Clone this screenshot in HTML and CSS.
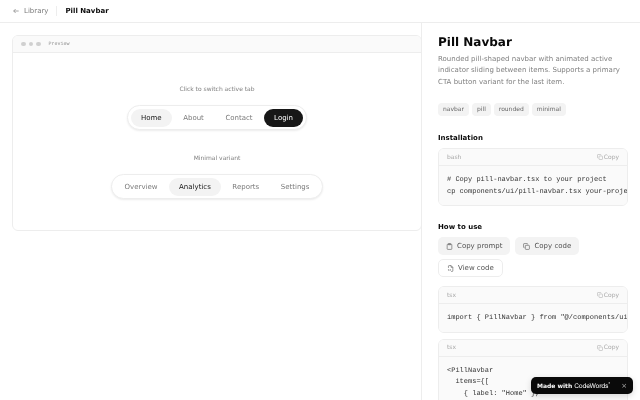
FILE: index.html
```html
<!DOCTYPE html>
<html lang="en">
<head>
<meta charset="utf-8">
<title>Pill Navbar</title>
<link rel="stylesheet" href="styles.css">
</head>
<body>
<header class="top">
  <a class="back"><svg class="ic-back" viewBox="0 0 12 12"><path d="M10 6H2.500M5.500 3 2.500 6l3 3"/></svg>Library</a>
  <span class="sep"></span>
  <b class="crumb">Pill Navbar</b>
</header>
<div class="main">
  <section class="left">
    <div class="card">
      <div class="bar">
        <i class="dot"></i><i class="dot"></i><i class="dot"></i>
        <span class="bar-label">Preview</span>
      </div>
      <div class="stage">
        <p class="cap">Click to switch active tab</p>
        <nav class="pill">
          <a class="item active">Home</a><a class="item">About</a><a class="item">Contact</a><a class="item cta">Login</a>
        </nav>
        <p class="cap cap2">Minimal variant</p>
        <nav class="pill">
          <a class="item">Overview</a><a class="item active">Analytics</a><a class="item">Reports</a><a class="item">Settings</a>
        </nav>
      </div>
    </div>
  </section>
  <aside class="side">
    <h1>Pill Navbar</h1>
    <p class="desc">Rounded pill-shaped navbar with animated active indicator sliding between items. Supports a primary CTA button variant for the last item.</p>
    <div class="tags"><span>navbar</span><span>pill</span><span>rounded</span><span>minimal</span></div>
    <h2>Installation</h2>
    <div class="code">
      <div class="code-h"><span>bash</span><span class="copy"><svg class="ic-s" viewBox="0 0 12 12"><rect x="4" y="4" width="7" height="7" rx="1.200"/><path d="M2.500 8H2a1 1 0 0 1-1-1V2a1 1 0 0 1 1-1h5a1 1 0 0 1 1 1v.5"/></svg>Copy</span></div>
      <pre># Copy pill-navbar.tsx to your project
cp components/ui/pill-navbar.tsx your-project/components/</pre>
    </div>
    <h2 class="how">How to use</h2>
    <div class="btns">
      <a class="btn"><svg class="ic" viewBox="0 0 12 12"><rect x="2" y="2" width="8" height="9" rx="1.200"/><rect x="4" y="1" width="4" height="2" rx=".5"/></svg>Copy prompt</a>
      <a class="btn"><svg class="ic" viewBox="0 0 12 12"><rect x="4" y="4" width="7" height="7" rx="1.200"/><path d="M2.500 8H2a1 1 0 0 1-1-1V2a1 1 0 0 1 1-1h5a1 1 0 0 1 1 1v.5"/></svg>Copy code</a>
      <a class="btn ghost"><svg class="ic" viewBox="0 0 12 12"><path d="M2.500 5V2a1 1 0 0 1 1-1H7l3 3v6a1 1 0 0 1-1 1H7M7 1v3h3M3.500 7 2 8.500 3.500 10M5 7l1.500 1.500L5 10"/></svg>View code</a>
    </div>
    <div class="code">
      <div class="code-h"><span>tsx</span><span class="copy"><svg class="ic-s" viewBox="0 0 12 12"><rect x="4" y="4" width="7" height="7" rx="1.200"/><path d="M2.500 8H2a1 1 0 0 1-1-1V2a1 1 0 0 1 1-1h5a1 1 0 0 1 1 1v.5"/></svg>Copy</span></div>
      <pre>import { PillNavbar } from "@/components/ui/pill-navbar"</pre>
    </div>
    <div class="code">
      <div class="code-h"><span>tsx</span><span class="copy"><svg class="ic-s" viewBox="0 0 12 12"><rect x="4" y="4" width="7" height="7" rx="1.200"/><path d="M2.500 8H2a1 1 0 0 1-1-1V2a1 1 0 0 1 1-1h5a1 1 0 0 1 1 1v.5"/></svg>Copy</span></div>
      <pre>&lt;PillNavbar
  items={[
    { label: "Home" },
    { label: "About" },
  ]}
/&gt;</pre>
    </div>
  </aside>
</div>
<div class="toast"><span class="made">Made with <span class="brand">CodeWords<sup>*</sup></span></span><span class="x">×</span></div>
</body>
</html>
```
FILE: styles.css
```css
* { box-sizing: border-box; }
html { background: #fff; }
html, body { margin: 0; height: 100%; overflow: hidden; }
body { color: #171717; font-family: "DejaVu Sans", sans-serif; text-rendering: geometricPrecision; display: flex; flex-direction: column; will-change: transform; }
.top { height: 23px; flex: none; border-bottom: 1px solid #ededed; display: flex; align-items: center; padding: 0 12px; font-size: 7px; }
.back { display: flex; align-items: center; gap: 4px; color: #7a7a7a; }
.ic-back { width: 8px; height: 8px; fill: none; stroke: #7a7a7a; stroke-width: 1; }
.sep { width: 1px; height: 10px; background: #ededed; margin: 0 8px; }
.crumb { font-weight: 700; color: #0a0a0a; }
.main { flex: 1; display: flex; min-height: 0; }
.left { width: 422px; flex: none; padding: 12px 0 0 12px; border-right: 1px solid #ededed; }
.card { height: 196px; margin-right: -1px; border: 1px solid #ededed; border-radius: 6px; overflow: hidden; }
.bar { height: 17px; border-bottom: 1px solid #ededed; background: #fafafa; display: flex; align-items: center; padding: 0 8px; gap: 3px; }
.dot { width: 4.500px; height: 4.500px; border-radius: 50%; background: #d0d0d0; }
.bar-label { font: 5px "Liberation Mono", monospace; color: #8f8f8f; margin-left: 5px; }
.stage { display: flex; flex-direction: column; align-items: center; padding-top: 33px; }
.cap { margin: 0; font-size: 6px; line-height: 8px; color: #7f7f7f; }
.cap2 { margin-top: 25px; }
.pill { display: flex; gap: 1.500px; margin-top: 11px; height: 25px; padding: 3px; border: 1px solid #ededed; border-radius: 13px; background: #fff; box-shadow: 0 1px 2px rgba(0,0,0,.08); }
.item { height: 18px; line-height: 18px; padding: 0 10px; border-radius: 9px; font-size: 7px; color: #7a7a7a; }
.item.active { background: #f3f3f3; color: #171717; }
.item.cta { background: #171717; color: #fff; }
.side { flex: 1; min-width: 0; padding: 12px 12px 0 16px; overflow: hidden; }
h1 { margin: 0; font-size: 12px; line-height: 15px; font-weight: 700; color: #0a0a0a; }
.desc { margin: 4px 0 0; font-size: 7px; line-height: 11.375px; color: #7f7f7f; }
.tags { display: flex; gap: 3px; margin-top: 15px; }
.tags span { font-size: 6px; line-height: 13px; padding: 0 5px; background: #f3f3f3; border-radius: 4px; color: #666; }
h2 { margin: 16.500px 0 5.500px; font-size: 7px; line-height: 10px; font-weight: 700; color: #0a0a0a; }
.code { border: 1px solid #ededed; border-radius: 6px; overflow: hidden; margin-bottom: 6px; }
.code-h { height: 17px; background: #fafafa; border-bottom: 1px solid #ededed; display: flex; align-items: center; justify-content: space-between; padding: 0 8px; font-size: 6px; color: #a8a8a8; }
.copy { display: flex; align-items: center; gap: 1px; }
.ic-s { width: 6px; height: 6px; fill: none; stroke: #a8a8a8; stroke-width: 1; }
pre { margin: 0; padding: 9px 8px 7px; font: 7px/11.500px "Liberation Mono", monospace; color: #333; background: #fafafa; overflow: hidden; }
.how { margin-top: 15.500px; }
.btns { display: flex; flex-wrap: wrap; gap: 4px 5px; margin-bottom: 9px; }
.btn { display: flex; align-items: center; gap: 4px; height: 18px; padding: 0 8px; border-radius: 5px; background: #f3f3f3; font-size: 7px; color: #525252; }
.btn.ghost { background: #fff; border: 1px solid #ededed; }
.ic { width: 7px; height: 7px; fill: none; stroke: #525252; stroke-width: 1; }
.toast { position: absolute; left: 531px; top: 377px; width: 102px; height: 17px; border-radius: 5px; background: #0a0a0a; color: #fff; display: flex; align-items: center; justify-content: space-between; padding: 0 6px; font-size: 6px; font-weight: 700; box-shadow: 0 2px 6px rgba(0,0,0,.15); }
.brand { font-family: "Inter", sans-serif; font-size: 6.500px; font-weight: 400; letter-spacing: -.2px; }
.brand sup { font-size: 4px; line-height: 0; }
.x { color: #aaa; font-weight: 400; font-size: 7px; }
```
